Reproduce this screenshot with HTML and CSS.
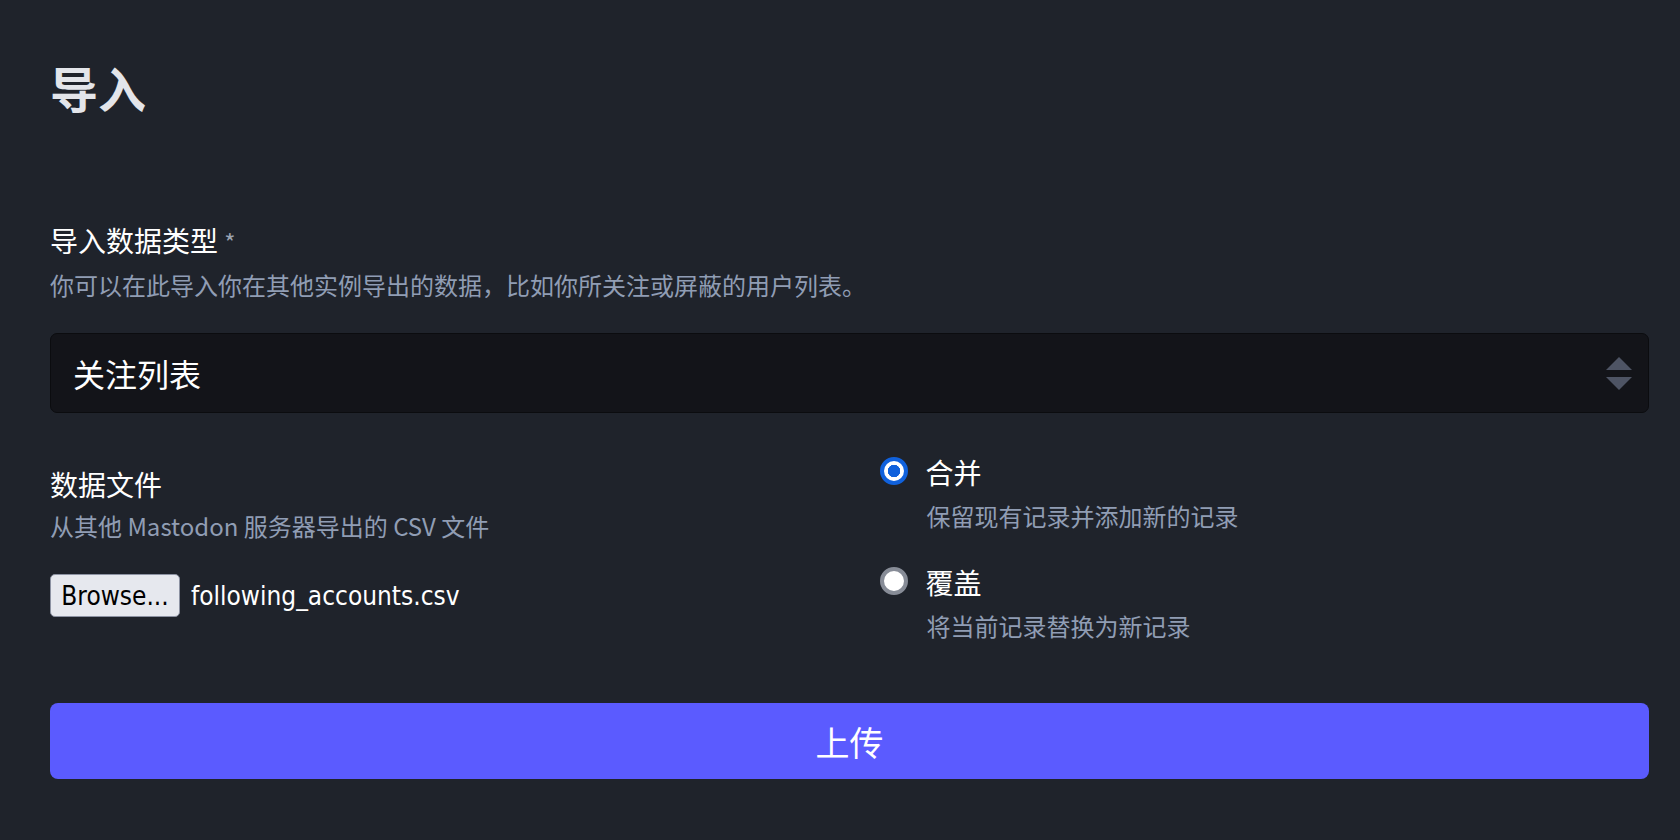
FILE: index.html
```html
<!DOCTYPE html>
<html lang="zh-CN">
<head>
    <meta charset="utf-8">
    <title>导入</title>
    <meta name="viewport" content="width=device-width, initial-scale=1">
    <link rel="stylesheet" href="styles.css">
</head>
<body>
    <div class="page">
        <h2 class="title">导入</h2>

        <form class="import-form" onsubmit="return false">
            <div class="field">
                <label class="field-label" for="importType">导入数据类型 <abbr class="req" title="必填">*</abbr></label>
                <div class="hint">你可以在此导入你在其他实例导出的数据，比如你所关注或屏蔽的用户列表。</div>
                <div class="select-wrap">
                    <select id="importType" class="select">
                        <option selected>关注列表</option>
                        <option>屏蔽列表</option>
                        <option>隐藏列表</option>
                        <option>域名屏蔽列表</option>
                        <option>书签</option>
                    </select>
                    <svg class="select-arrows" width="26" height="34" viewBox="0 0 26 34">
                        <polygon points="13,0 26,13 0,13" fill="#4e5464"/>
                        <polygon points="0,20 26,20 13,33" fill="#4e5464"/>
                    </svg>
                </div>
            </div>

            <div class="row">
                <div class="col col-file">
                    <div class="field-label">数据文件</div>
                    <div class="hint hint-tight">从其他 Mastodon 服务器导出的 CSV 文件</div>
                    <div class="file-input">
                        <label class="file-btn" for="dataFile">Browse...</label>
                        <span class="file-name">following_accounts.csv</span>
                        <input type="file" id="dataFile" class="file-hidden">
                    </div>
                </div>

                <div class="col col-mode">
                    <label class="radio-option">
                        <input type="radio" name="mode" value="merge" checked>
                        <span class="radio-text">合并</span>
                    </label>
                    <div class="hint radio-hint">保留现有记录并添加新的记录</div>

                    <label class="radio-option second">
                        <input type="radio" name="mode" value="overwrite">
                        <span class="radio-text">覆盖</span>
                    </label>
                    <div class="hint radio-hint">将当前记录替换为新记录</div>
                </div>
            </div>

            <button type="submit" class="submit">上传</button>
        </form>
    </div>
</body>
</html>
```

FILE: styles.css
```css
body {
    margin: 0;
    background-color: #1f232b;
    color: #ffffff;
    font-family: "Noto Sans CJK SC", "Noto Sans", sans-serif;
}
.page {
    padding: 59px 31px 0 50px;
}
.title {
    margin: 0 0 105px;
    font-size: 48px;
    line-height: 56px;
    font-weight: bold;
    color: #e3e5ea;
}
.field-label {
    display: block;
    font-size: 28px;
    line-height: 40px;
}
.req {
    text-decoration: none;
    border: none;
    color: #9ba3b2;
    font-size: 24px;
}
.hint {
    margin-top: 5px;
    font-size: 24px;
    line-height: 36px;
    color: #909db4;
}
.hint-tight {
    margin-top: 4px;
}
.select-wrap {
    position: relative;
    margin-top: 30px;
}
.select {
    display: block;
    width: 100%;
    height: 80px;
    padding: 0 22px;
    box-sizing: border-box;
    appearance: none;
    -webkit-appearance: none;
    background-color: #131419;
    border: 1px solid #0b0c0f;
    border-radius: 7px;
    color: #ffffff;
    font-family: inherit;
    font-size: 32px;
    outline: none;
}
.select-arrows {
    position: absolute;
    right: 17px;
    top: 24px;
    pointer-events: none;
}
.row {
    display: grid;
    grid-template-columns: 1fr 1fr;
    margin-top: 39px;
}
.col-file {
    padding-top: 12px;
}
.col-mode {
    padding-left: 30px;
}
.file-input {
    display: flex;
    align-items: center;
    margin-top: 30px;
}
.file-btn {
    display: flex;
    align-items: center;
    height: 43px;
    width: 130px;
    box-sizing: border-box;
    justify-content: center;
    background-color: #e6e8ee;
    border: 1px solid #8c92a2;
    border-radius: 5px;
    color: #000000;
    font-family: "Liberation Sans Narrow", "DejaVu Sans Condensed", sans-serif;
    font-size: 26px;
    cursor: pointer;
}
.file-name {
    margin-left: 11px;
    font-family: "Liberation Sans Narrow", "DejaVu Sans Condensed", sans-serif;
    font-size: 26px;
    color: #ffffff;
}
.file-hidden {
    display: none;
}
.radio-option {
    display: flex;
    align-items: center;
    gap: 18px;
    font-size: 28px;
    line-height: 40px;
    cursor: pointer;
}
.radio-option.second {
    margin-top: 28px;
}
.radio-option input {
    appearance: none;
    -webkit-appearance: none;
    margin: -3px 0 0;
    width: 28px;
    height: 28px;
    box-sizing: border-box;
    border-radius: 50%;
    border: 4px solid #878c97;
    background-color: #ffffff;
}
.radio-option input:checked {
    border-color: #1061dc;
    background: radial-gradient(circle, #1061dc 0 6px, #ffffff 6.5px);
}
.radio-hint {
    margin-top: 6px;
    padding-left: 47px;
}
.submit {
    display: block;
    width: 100%;
    height: 76px;
    margin-top: 59px;
    border: none;
    border-radius: 8px;
    background-color: #5b5bff;
    color: #ffffff;
    font-family: inherit;
    font-size: 34px;
    cursor: pointer;
}
.submit:hover {
    background-color: #6a6aff;
}
```
